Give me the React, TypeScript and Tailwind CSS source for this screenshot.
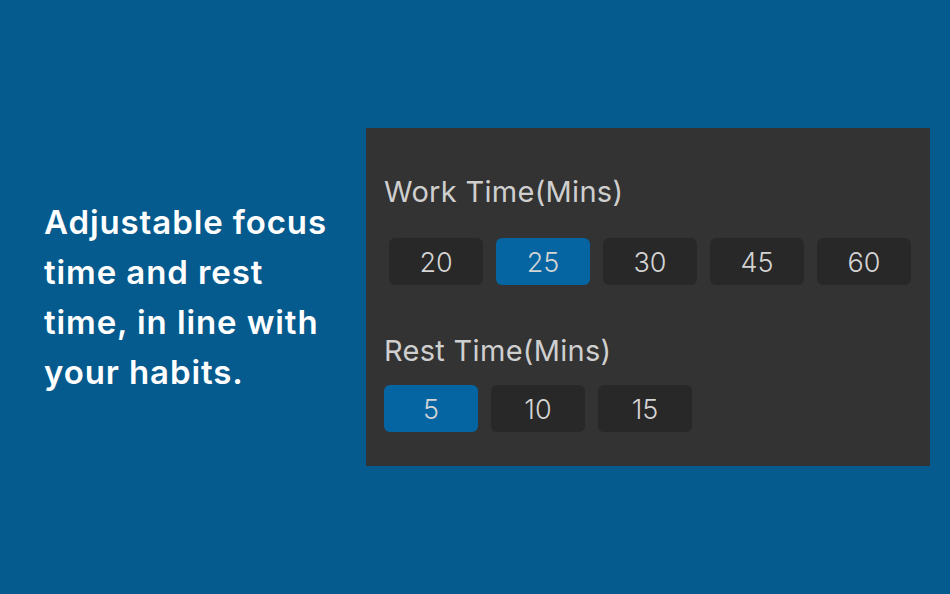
import React from 'react';

const workOptions = [20, 25, 30, 45, 60];
const restOptions = [5, 10, 15];

function OptionButton({ value, active }: { value: number; active: boolean }) {
  return (
    <div
      className={`flex h-[47px] w-[94px] items-center justify-center rounded-[6px] pt-[3px] text-[27px] font-light text-[#d4d4d4] ${
        active ? 'bg-[#0565a3]' : 'bg-[#282828]'
      }`}
    >
      {value}
    </div>
  );
}

export default function App() {
  return (
    <div
      className="flex h-[594px] w-[950px] items-center bg-[#055a8e]"
      style={{ fontFamily: 'Inter, "Noto Sans", sans-serif' }}
    >
      <div className="w-[366px] shrink-0 pl-[44px] pr-[10px] text-[33px] font-semibold leading-[50px] tracking-[0.9px] text-white">
        Adjustable focus time and rest time, in line with your habits.
      </div>

      <div className="h-[338px] w-[564px] shrink-0 bg-[#333333] pl-[18px] pt-[44px]">
        <h2 className="text-[29px] font-normal leading-[40px] tracking-[0.3px] text-[#cfcfcf]">Work Time(Mins)</h2>
        <div className="mt-[26px] flex gap-[13px] pl-[5px]">
          {workOptions.map((v) => (
            <OptionButton key={v} value={v} active={v === 25} />
          ))}
        </div>

        <h2 className="mt-[46px] text-[29px] font-normal leading-[40px] tracking-[0.3px] text-[#cfcfcf]">Rest Time(Mins)</h2>
        <div className="mt-[14px] flex gap-[13px]">
          {restOptions.map((v) => (
            <OptionButton key={v} value={v} active={v === 5} />
          ))}
        </div>
      </div>
    </div>
  );
}
